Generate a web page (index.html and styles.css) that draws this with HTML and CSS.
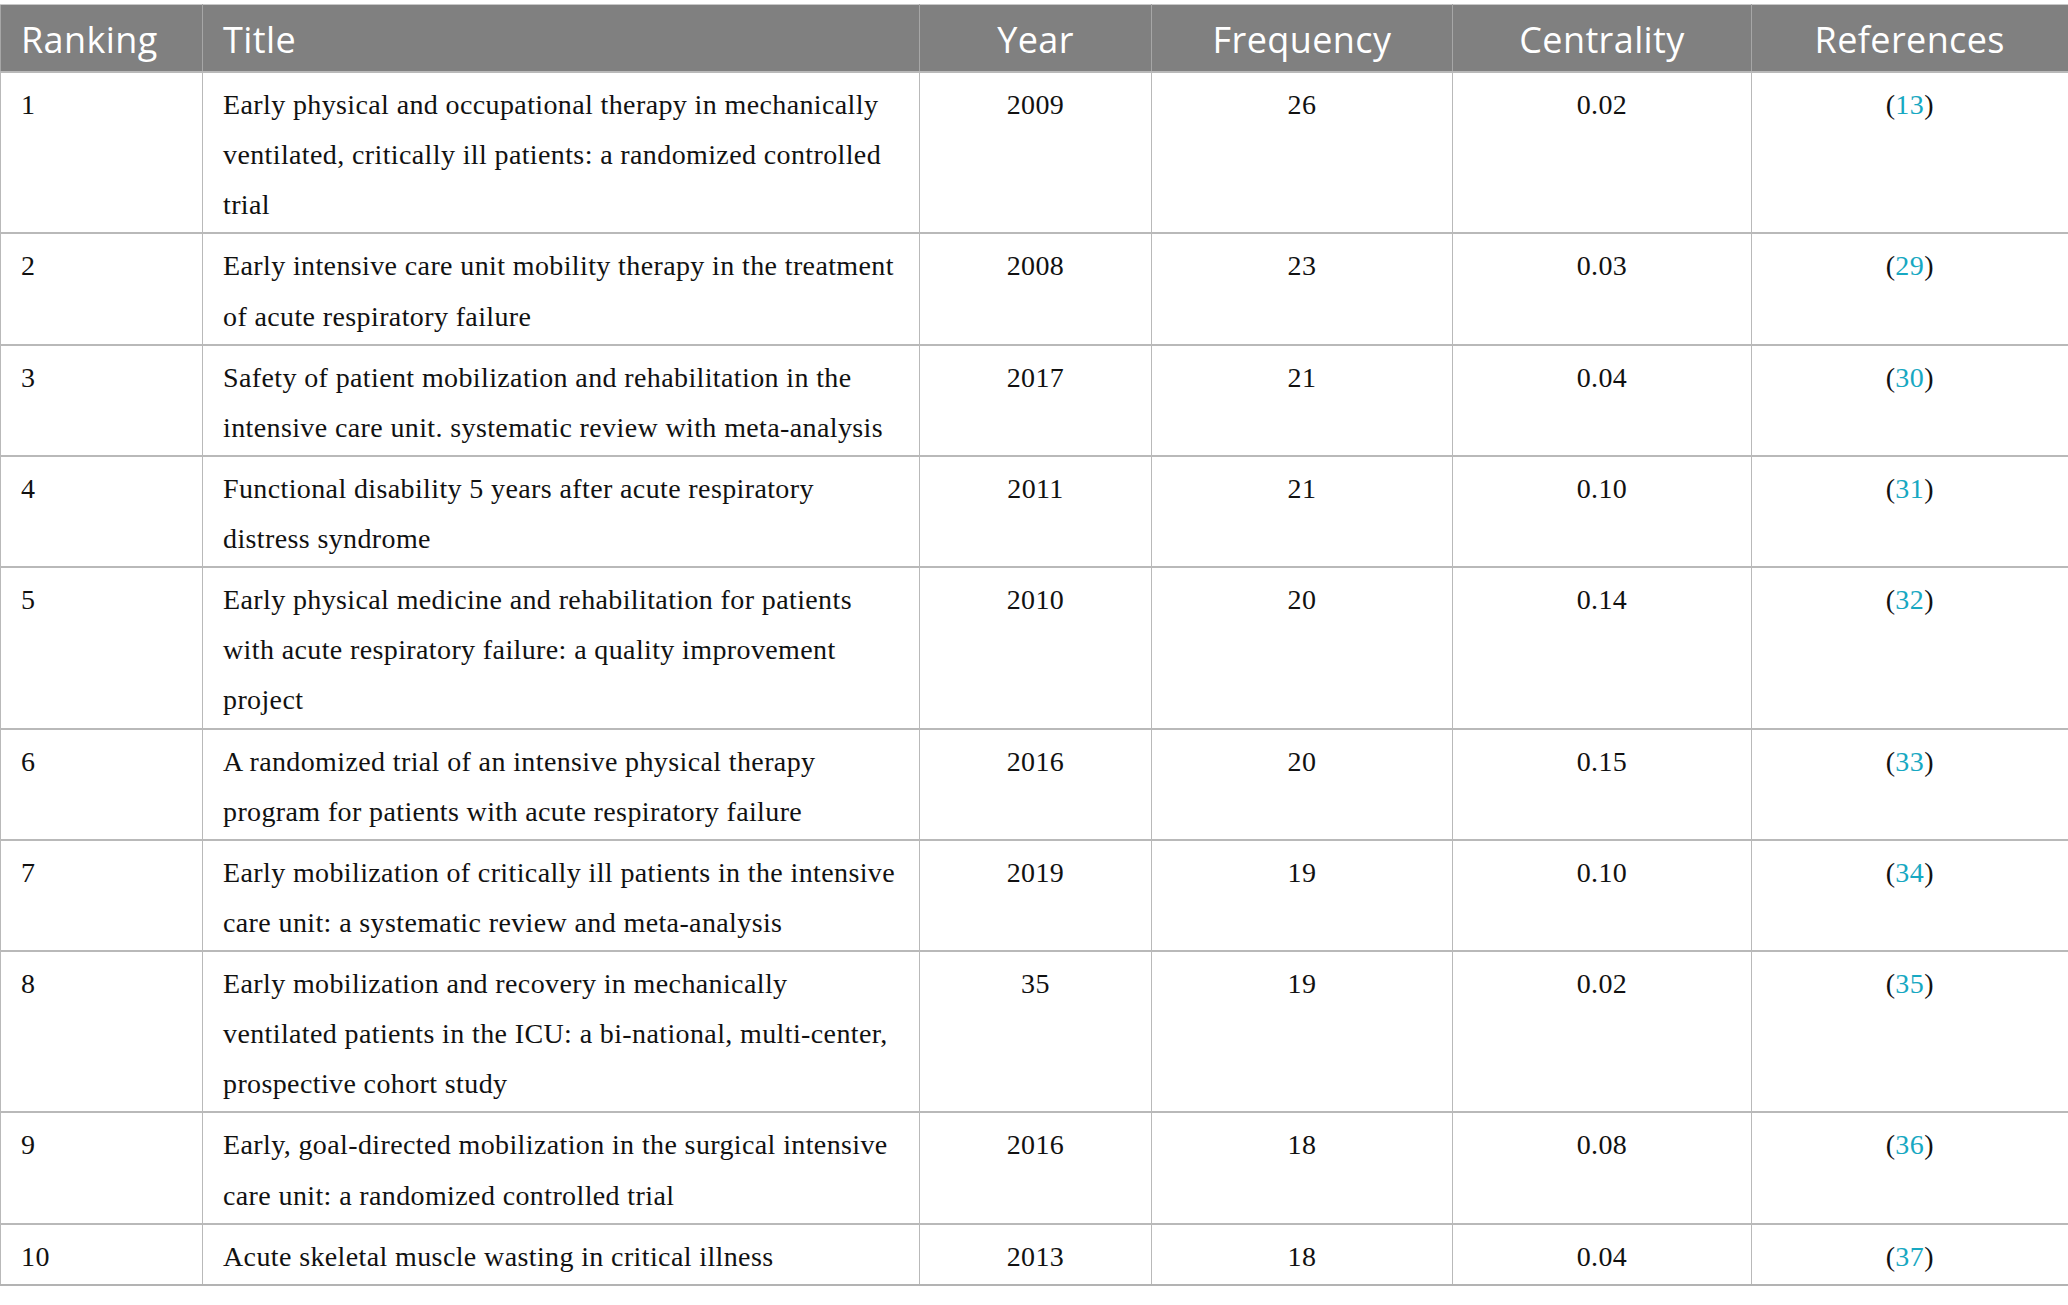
FILE: index.html
```html
<!DOCTYPE html>
<html lang="en">
<head>
<meta charset="utf-8">
<title>Top 10 co-cited references</title>
<link rel="stylesheet" href="styles.css">
</head>
<body>
<table class="refs">
  <colgroup>
    <col class="c-rank">
    <col class="c-title">
    <col class="c-year">
    <col class="c-freq">
    <col class="c-cent">
    <col class="c-ref">
  </colgroup>
  <thead>
    <tr>
      <th class="left">Ranking</th>
      <th class="left">Title</th>
      <th>Year</th>
      <th>Frequency</th>
      <th>Centrality</th>
      <th>References</th>
    </tr>
  </thead>
  <tbody>
    <tr>
      <td class="left">1</td>
      <td class="left title">Early physical and occupational therapy in mechanically<br>ventilated, critically ill patients: a randomized controlled<br>trial</td>
      <td>2009</td><td>26</td><td>0.02</td>
      <td>(<a href="#r13">13</a>)</td>
    </tr>
    <tr>
      <td class="left">2</td>
      <td class="left title">Early intensive care unit mobility therapy in the treatment<br>of acute respiratory failure</td>
      <td>2008</td><td>23</td><td>0.03</td>
      <td>(<a href="#r29">29</a>)</td>
    </tr>
    <tr>
      <td class="left">3</td>
      <td class="left title">Safety of patient mobilization and rehabilitation in the<br>intensive care unit. systematic review with meta-analysis</td>
      <td>2017</td><td>21</td><td>0.04</td>
      <td>(<a href="#r30">30</a>)</td>
    </tr>
    <tr>
      <td class="left">4</td>
      <td class="left title">Functional disability 5 years after acute respiratory<br>distress syndrome</td>
      <td>2011</td><td>21</td><td>0.10</td>
      <td>(<a href="#r31">31</a>)</td>
    </tr>
    <tr>
      <td class="left">5</td>
      <td class="left title">Early physical medicine and rehabilitation for patients<br>with acute respiratory failure: a quality improvement<br>project</td>
      <td>2010</td><td>20</td><td>0.14</td>
      <td>(<a href="#r32">32</a>)</td>
    </tr>
    <tr>
      <td class="left">6</td>
      <td class="left title">A randomized trial of an intensive physical therapy<br>program for patients with acute respiratory failure</td>
      <td>2016</td><td>20</td><td>0.15</td>
      <td>(<a href="#r33">33</a>)</td>
    </tr>
    <tr>
      <td class="left">7</td>
      <td class="left title">Early mobilization of critically ill patients in the intensive<br>care unit: a systematic review and meta-analysis</td>
      <td>2019</td><td>19</td><td>0.10</td>
      <td>(<a href="#r34">34</a>)</td>
    </tr>
    <tr>
      <td class="left">8</td>
      <td class="left title">Early mobilization and recovery in mechanically<br>ventilated patients in the ICU: a bi-national, multi-center,<br>prospective cohort study</td>
      <td>35</td><td>19</td><td>0.02</td>
      <td>(<a href="#r35">35</a>)</td>
    </tr>
    <tr>
      <td class="left">9</td>
      <td class="left title">Early, goal-directed mobilization in the surgical intensive<br>care unit: a randomized controlled trial</td>
      <td>2016</td><td>18</td><td>0.08</td>
      <td>(<a href="#r36">36</a>)</td>
    </tr>
    <tr>
      <td class="left">10</td>
      <td class="left title">Acute skeletal muscle wasting in critical illness</td>
      <td>2013</td><td>18</td><td>0.04</td>
      <td>(<a href="#r37">37</a>)</td>
    </tr>
  </tbody>
</table>
</body>
</html>
```

FILE: styles.css
```css
html, body {
  margin: 0;
  padding: 0;
  background: #ffffff;
}

body {
  padding-top: 4px;
}

.refs {
  width: 2068px;
  border-collapse: collapse;
  table-layout: fixed;
  border-right: 2px solid #b3b3b3;
  border-bottom: 2px solid #b3b3b3;
}

.c-rank { width: 202px; }
.c-title { width: 717px; }
.c-year { width: 232px; }
.c-freq { width: 301px; }
.c-cent { width: 299px; }
.c-ref { width: 317px; }

.refs th {
  background: #808080;
  color: #ffffff;
  font-family: "Open Sans", "Noto Sans", sans-serif;
  font-weight: 400;
  font-size: 36px;
  letter-spacing: 0.4px;
  line-height: 50px;
  padding: 10px 20px 6px 20px;
  text-align: center;
  border-top: 1px solid #c8c8c8;
  border-left: 1px solid #a6a6a6;
  border-right: 1px solid #a6a6a6;
  white-space: nowrap;
}

.refs td {
  font-family: "Liberation Serif", "Times New Roman", serif;
  font-size: 28px;
  letter-spacing: 0.38px;
  line-height: 50.12px;
  color: #111111;
  padding: 7px 20px 2px 20px;
  text-align: center;
  vertical-align: top;
  border-top: 2px solid #b9b9b9;
  border-left: 1px solid #b9b9b9;
  border-right: 1px solid #b9b9b9;
}

.refs .left {
  text-align: left;
}

.refs th.left {
  padding-left: 20px;
}

.refs td.title {
  white-space: nowrap;
  padding-right: 4px;
}

.refs a {
  color: #17a8c2;
  text-decoration: none;
}
```
